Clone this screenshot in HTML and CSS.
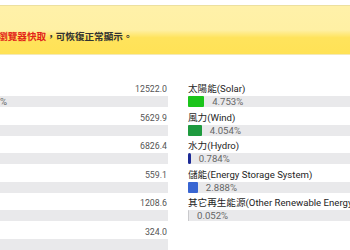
FILE: index.html
```html
<!DOCTYPE html>
<html lang="zh-Hant">
<head>
  <meta charset="UTF-8">
  <title>再生能源發電量</title>
  <meta name="viewport" content="width=device-width, initial-scale=1.0">
  <link rel="stylesheet" href="styles.css">
</head>
<body>
  <div class="notice">
    <span class="hint">清除瀏覽器快取</span>，可恢復正常顯示。
  </div>

  <div class="chart">
    <div class="col totals">
      <div class="row"><div class="label">12522.0</div><div class="bar"><span class="pct">%</span></div></div>
      <div class="row"><div class="label">5629.9</div><div class="bar"></div></div>
      <div class="row"><div class="label">6826.4</div><div class="bar"></div></div>
      <div class="row"><div class="label">559.1</div><div class="bar"></div></div>
      <div class="row"><div class="label">1208.6</div><div class="bar"></div></div>
      <div class="row"><div class="label">324.0</div><div class="bar"></div></div>
    </div>

    <div class="col sources">
      <div class="row">
        <div class="label">太陽能(Solar)</div>
        <div class="bar"><span class="fill solar" style="width: 4.753%"></span><span class="pct">4.753%</span></div>
      </div>
      <div class="row">
        <div class="label">風力(Wind)</div>
        <div class="bar"><span class="fill wind" style="width: 4.054%"></span><span class="pct">4.054%</span></div>
      </div>
      <div class="row">
        <div class="label">水力(Hydro)</div>
        <div class="bar"><span class="fill hydro" style="width: 0.784%"></span><span class="pct">0.784%</span></div>
      </div>
      <div class="row">
        <div class="label">儲能(Energy Storage System)</div>
        <div class="bar"><span class="fill storage" style="width: 2.888%"></span><span class="pct">2.888%</span></div>
      </div>
      <div class="row">
        <div class="label">其它再生能源(Other Renewable Energy)</div>
        <div class="bar"><span class="fill other" style="width: 0.3%"></span><span class="pct">0.052%</span></div>
      </div>
    </div>
  </div>
</body>
</html>
```

FILE: styles.css
```css
* {
  box-sizing: border-box;
}

body {
  margin: 0;
  background: #fff;
  font-family: Roboto, "Noto Sans CJK TC", sans-serif;
  font-size: 9.6px;
  color: #1e1e1e;
  overflow: hidden;
}

.notice {
  margin-top: 5px;
  height: 50px;
  padding-top: 24px;
  text-indent: -21px;
  white-space: nowrap;
  line-height: 14px;
  font-weight: bold;
  color: #333;
  border-top: 1px solid #ece0a0;
  border-bottom: 1px solid #f3e9b8;
  background: linear-gradient(#fff1a9 0%, #fff0a4 50%, #ffe35c 66%, #ffe256 100%);
}

.hint {
  color: #e2231a;
}

.chart {
  display: grid;
  grid-template-columns: 168px 1fr;
  column-gap: 20px;
  margin-top: 27px;
}

.row {
  height: 28.6px;
}

.label {
  height: 14px;
  line-height: 14px;
  white-space: nowrap;
}

.totals .label {
  text-align: right;
  font-size: 8.8px;
  color: #555;
  padding-right: 1px;
}

.bar {
  display: flex;
  align-items: center;
  height: 11px;
  background: #e9e9eb;
  white-space: nowrap;
}

.sources .bar {
  width: 340px;
}

.fill {
  flex: none;
  height: 100%;
  border-radius: 1px;
}

.solar { background: #1bc41b; }
.wind { background: #1e9a3e; }
.hydro { background: #1c2a96; border-radius: 2px; }
.storage { background: #3865d2; }
.other { background: #c9c9cc; }

.pct {
  margin-left: 8px;
  font-size: 9.6px;
  color: #666;
  line-height: 11px;
}

.totals .pct {
  margin-left: 0;
}
```
